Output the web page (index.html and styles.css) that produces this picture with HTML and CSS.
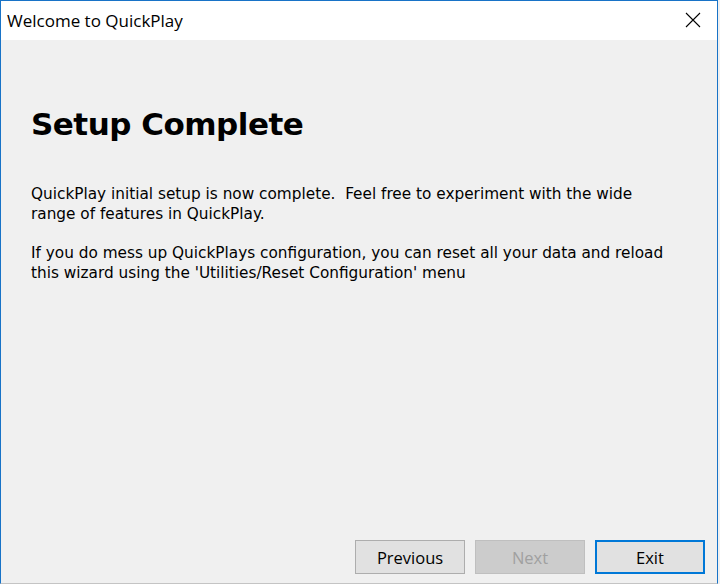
FILE: index.html
```html
<!DOCTYPE html>
<html>
<head>
<meta charset="utf-8">
<link rel="stylesheet" href="styles.css">
</head>
<body>
<div class="window">
  <div class="titlebar">
    <span class="title">Welcome to QuickPlay</span>
    <svg class="close" width="16" height="16" viewBox="0 0 16 16"><path d="M1 1 L15 15 M15 1 L1 15" stroke="#000" stroke-width="1.1" fill="none"/></svg>
  </div>
  <div class="content">
    <h1 class="heading">Setup Complete</h1>
    <p class="para">QuickPlay initial setup is now complete.&nbsp; Feel free to experiment with the wide range of features in QuickPlay.</p>
    <p class="para">If you do mess up QuickPlays configuration, you can reset all your data and reload this wizard using the 'Utilities/Reset Configuration' menu</p>
  </div>
  <div class="footer">
    <button class="btn">Previous</button>
    <button class="btn disabled">Next</button>
    <button class="btn default">Exit</button>
  </div>
</div>
</body>
</html>
```

FILE: styles.css
```css
html, body {
  margin: 0;
  padding: 0;
  background: #f0f0f0;
}
body {
  width: 720px;
  height: 584px;
  overflow: hidden;
  font-family: "Open Sans", "Noto Sans", sans-serif;
}
.window {
  box-sizing: border-box;
  width: 718px;
  height: 584px;
  display: flex;
  flex-direction: column;
  background: #f0f0f0;
  border-left: 1px solid #1873c7;
  border-right: 1px solid #1873c7;
  border-top: 1px solid #1873c7;
  border-bottom: 1px solid #c4c4c4;
}
.titlebar {
  height: 39px;
  background: #ffffff;
  display: flex;
  align-items: center;
  justify-content: space-between;
  padding: 0 16px 0 6px;
  flex-shrink: 0;
}
.title {
  font-size: 17px;
  color: #000;
}
.close {
  margin-top: -2px;
}
.content {
  flex: 1;
  padding: 60px 20px 0 30px;
  color: #000;
}
.heading {
  font-family: "DejaVu Sans", sans-serif;
  font-weight: bold;
  font-size: 31px;
  margin: 0 0 36px 0;
  line-height: 48px;
  letter-spacing: -0.5px;
}
.para {
  font-family: "DejaVu Sans", sans-serif;
  font-size: 15.3px;
  line-height: 20px;
  margin: 0 0 19px 0;
  max-width: 638px;
}
.footer {
  display: flex;
  justify-content: flex-end;
  gap: 10px;
  padding: 0 12px 9px 0;
}
.btn {
  box-sizing: border-box;
  width: 110px;
  height: 34px;
  background: #e1e1e1;
  border: 1px solid #adadad;
  font-family: "Open Sans", "Noto Sans", sans-serif;
  font-size: 16.5px;
  color: #000;
  padding: 0;
}
.btn.disabled {
  background: #cccccc;
  border-color: #bfbfbf;
  color: #a0a0a0;
}
.btn.default {
  border: 2px solid #0078d7;
}
```
